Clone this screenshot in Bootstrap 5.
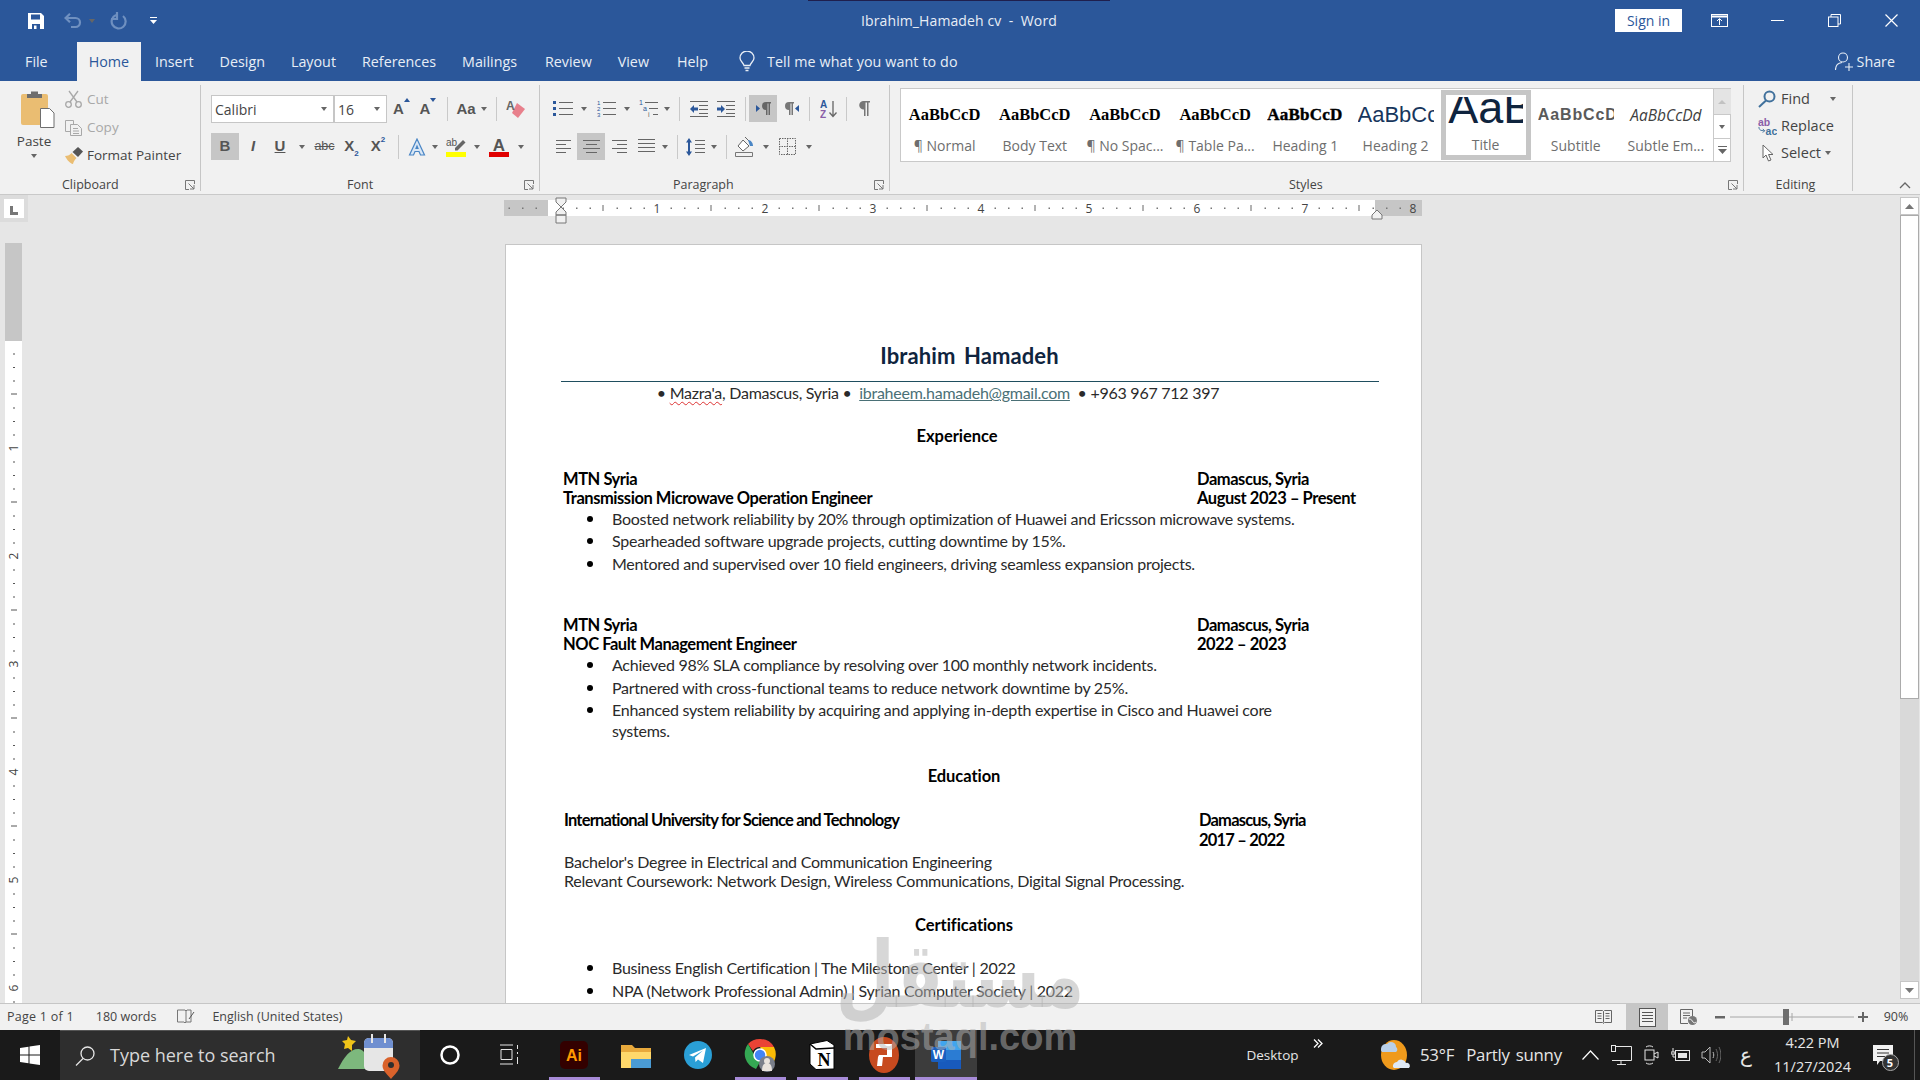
<!DOCTYPE html>
<html lang="en">
<head>
<meta charset="UTF-8">
<title>Ibrahim_Hamadeh cv - Word</title>
<link href="https://cdn.jsdelivr.net/npm/bootstrap@5.3.0/dist/css/bootstrap.min.css" rel="stylesheet">
<style>
body { height:1080px; overflow:hidden; background:#e6e6e6; font-family:"Open Sans","Liberation Sans",sans-serif; color:#444; font-size:13.5px; position:relative; }
svg { display:block; }
/* title bar and tabs */
.title-bar { height:42px; background:#2b579a; color:#e8eef6; flex:none; }
.accent-line { height:1px; width:302px; margin-left:808px; background:#1f1f4d; }
.title-main { height:39px; }
.qat { width:700px; padding-left:24px; display:grid; grid-template-columns:24px 12px 26px 12px 8px 24px 16px 14px; align-items:center; justify-items:center; }
.doc-title { width:518px; text-align:center; font-size:14px; letter-spacing:.1px; }
.sign-in { width:67px; height:23px; margin-left:397px; margin-right:8px; background:#fff; color:#2b579a; font-size:14px; line-height:23px; text-align:center; }
.win-btns { display:grid; grid-template-columns:58px 58px 57px 57px; justify-items:center; }
.tab-bar { height:39px; background:#2b579a; color:#e8eef6; flex:none; font-size:14.3px; }
.rb-tab { padding:0 13px; line-height:39px; }
.rb-tab.first { padding:0 29px 0 25px; }
.rb-tab.active { background:#f1f1f1; color:#2b579a; padding:0 12px; margin-right:1px; }
.rb-tab.nudge { margin-left:2px; }
.tell-me { margin-left:18px; gap:12px; letter-spacing:.1px; }
.share { margin-left:auto; margin-right:25px; gap:4px; }
/* ribbon */
.ribbon { height:114px; background:#f1f1f1; border-bottom:1px solid #c9c9c9; flex:none; }
.grp { margin-top:4px; height:106px; border-right:1px solid #c6c6c6; }
.grp-clip { width:201px; }
.grp-font { width:339px; padding-left:10px; }
.grp-para { width:350px; padding-left:10px; }
.grp-styles { width:854px; }
.grp-edit { width:109px; }
.grp-body { height:92px; }
.grp-label { display:grid; grid-template-columns:1fr auto 1fr; line-height:16px; font-size:12.5px; color:#444; padding-right:5px; align-items:center; }
.lbl-clip { grid-template-columns:62px auto 1fr; }
.lbl-font { margin-left:-10px; grid-template-columns:146px auto 1fr; }
.lbl-para { margin-left:-10px; grid-template-columns:133px auto 1fr; }
.lbl-styles { grid-template-columns:399px auto 1fr; }
.launch { justify-self:end; }
.tb-rows { padding-top:10px; }
.tb-row { display:grid; height:27px; align-items:center; justify-items:center; margin-bottom:11px; }
.font-r1 { grid-template-columns:123px 53px 1px 27px 26px 12px 26px 10px 14px 26px; }
.font-r2 { grid-template-columns:28px 28px 26px 18px 27px 27px 26px 14px 24px 11px 32px 10px 34px 10px; }
.para-r1 { grid-template-columns:26px 16px 28px 14px 28px 9px 16px 23px 32px 7px 28px 28px 8px 32px 3px 32px; }
.para-r2 { grid-template-columns:27px 28px 28px 27px 10px 14px 23px 13px 12px 26px 16px 26px 18px; }
.tb-on { background:#c6c6c6; align-self:stretch; justify-self:stretch; display:flex; align-items:center; justify-content:center; }
.crt { width:0; height:0; border-top:4px solid #666; border-left:3.5px solid transparent; border-right:3.5px solid transparent; }
.vs { width:1px; height:24px; background:#c9c9c9; }
.cmb { justify-self:stretch; height:28px; background:#fff; border:1px solid #c6c6c6; padding:0 6px 0 3px; font-size:14px; }
.sz-a { font-family:"Liberation Sans",sans-serif; color:#555; font-weight:700; font-size:15px; }
.sz-abc { font-size:12.5px; font-weight:400; }
.sz-sub { font-size:8px; color:#2b579a; line-height:9px; }
.paste-col { width:65px; padding:5px 0 0 20px; }
.paste-txt { width:36px; text-align:center; line-height:18px; margin:4px 0 0 -4px; }
.clip-row { height:28px; gap:6px; }
.muted-t { color:#a8a8a8; }
.clip-ic { width:16px; }
.styles-body { padding-top:3px; }
.gallery { margin-left:10px; height:74px; width:831px; background:#fff; border:1px solid #c9c9c9; }
.sty { width:90.2px; padding-top:10px; flex:none; }
.sty:first-child { margin-left:-1.5px; }
.sty-prev { width:76px; height:32px; line-height:32px; overflow:hidden; white-space:nowrap; text-align:center; font-family:"Liberation Serif",serif; font-weight:700; font-size:16.5px; color:#000; }
.sty-h1 { -webkit-text-stroke:.4px #000; font-size:17px; letter-spacing:.2px; text-align:left; }
.sty-h2 { font-family:"Liberation Sans",sans-serif; font-weight:400; font-size:22px; color:#17365d; }
.sty-sub { font-family:"Liberation Sans",sans-serif; font-size:16px; color:#5a5a5a; letter-spacing:.9px; text-align:left; }
.sty-em { font-family:"Open Sans",sans-serif; font-style:italic; font-weight:400; font-size:15.5px; color:#404040; }
.sty-lbl { font-size:14px; line-height:20px; margin-top:5px; color:#6e6e6e; white-space:nowrap; }
.sty-active { width:90px; height:70px; margin-top:1px; border:5px solid #c6c6c6; flex:none; }
.title-prev { height:27px; margin-top:2px; width:75px; overflow:hidden; font-family:"Liberation Sans",sans-serif; font-size:45px; line-height:22px; color:#0f243e; white-space:nowrap; }
.sty-active .sty-lbl { margin-top:11px; }
.sty-scroll { margin-left:1.5px; width:18px; border-left:1px solid #c9c9c9; flex:none; }
.scr-a { height:26px; background:#e4e4e4; border-bottom:1px solid #c9c9c9; }
.scr-b { height:24px; border-bottom:1px solid #c9c9c9; }
.scr-c { height:22px; }
.edit-rows { padding:0 0 0 14px; }
.edit-row { height:27px; gap:4px; font-size:14.5px; }
.edit-ic { width:19px; }
.collapse-col { width:100%; flex:1; padding:0 9px 5px 0; }
/* workspace */
.workspace { flex:1; min-height:0; }
.left-col { width:504px; flex:none; }
.tab-sel { width:28px; height:27px; background:#dcdcdc; padding:4px; }
.tab-sel-in { width:20px; height:19px; background:#fff; padding:7px 0 0 6px; }
.v-ruler { margin:21px 0 0 5px; }
.mid-col { width:920px; flex:none; padding-top:2px; }
.page-sheet { margin:17px 0 0 1px; width:917px; flex:1; min-height:0; background:#fff; border:1px solid #c6c6c6; border-bottom:0; overflow:hidden; padding:95px 42px 0 57px; font-family:Lato,"Liberation Sans",sans-serif; color:#2a2a2a; font-size:16px; letter-spacing:-.26px; font-weight:400; }
.cv-name { line-height:32px; font-size:22px; font-weight:700; text-align:center; color:#0f243e; padding-right:3px; letter-spacing:.1px; word-spacing:3px; }
.cv-rule { margin:9px 0 0 -2px; border-bottom:1px solid #1f4e5f; }
.cv-contact { line-height:20px; margin-top:1px; text-align:center; padding-right:66px; }
.cv-squig { text-decoration:underline wavy #d33; text-underline-offset:2px; text-decoration-thickness:1px; }
.cv-mail { color:#4a7076; text-decoration:underline; }
.cv-head { line-height:20px; font-weight:700; text-align:center; color:#000; letter-spacing:-.05px; font-size:16.5px; }
.cv-job { display:grid; grid-template-columns:634px 1fr; line-height:19px; font-weight:700; color:#000; font-size:16.5px; letter-spacing:-.45px; }
.cv-edu { grid-template-columns:635px 1fr; padding-left:1px; letter-spacing:-.8px; }
.cv-text { padding-left:1px; line-height:19px; }
.cv-ul { margin:.5px 0 0; padding:0 56px 0 49px; list-style:none; }
.cv-ul li { line-height:21px; margin-bottom:1.5px; position:relative; }
.cv-ul li::before { content:""; position:absolute; left:-25px; top:8px; width:6px; height:6px; border-radius:50%; background:#000; }
.cv-ul.ul-first { margin-top:-.5px; }
.h-exp { margin-top:23px; padding-right:28px; }
.h-edu { margin-top:24.5px; padding-right:14px; }
.h-cert { margin-top:24.5px; padding-right:14px; }
.mt-24 { margin-top:24px; }
.mt-42 { margin-top:42px; }
.mt-255 { margin-top:25.5px; }
.mt-edu2 { margin-top:1px; }
.mt-edu3 { margin-top:2px; }
.mt-225 { margin-top:22.5px; }
.right-col { flex:1; padding:2px 1px 4px 0; }
.vscroll { width:19px; background:#d9d9d9; }
.vs-btn { height:18px; background:#fff; border:1px solid #c6c6c6; flex:none; }
.vs-thumb { height:484px; background:#fff; border:1px solid #ababab; flex:none; }
/* status bar */
.status-bar { height:27px; background:#f1f1f1; border-top:1px solid #c6c6c6; flex:none; font-size:12.5px; color:#444; }
.st-left { padding-left:7px; gap:21px; }
.st-page { margin-right:1px; letter-spacing:.25px; }
.st-lang { margin-left:-4px; }
.st-right { display:grid; grid-template-columns:46px 42px 42px 20px 124px 18px 48px; justify-items:center; align-items:center; margin-left:auto; height:26px; }
/* taskbar */
.task-bar { height:50px; background:#1a1a1a; color:#e6e6e6; flex:none; }
.tk-start { width:60px; }
.tk-search { width:360px; background:#2e2e2e; border-top:1px solid #555; padding-left:15px; gap:15px; font-size:18px; color:#d8d8d8; }
.tk-deco { margin-right:20px; }
.tk-cell { width:60px; }
.tk-cell + .tk-app { margin-left:3px; }
.tk-app { width:62px; position:relative; }
.tk-app.pinned::after { content:""; position:absolute; left:6px; right:5px; bottom:0; height:3px; background:#a78bd8; }
.tk-app.current { background:#3c3c3c; }
.tk-app.current::after { left:0; right:0; }
.tk-right { margin-left:auto; display:grid; grid-template-columns:65px 25px 48px 34px 8px 141px 14px 30px 32px 28px 30px 32px 38px 95px 45px 15px; align-items:center; justify-items:center; }
.tk-clock { text-align:center; font-size:14.5px; line-height:24px; }
.tk-w { font-size:16.8px; justify-self:start; white-space:nowrap; word-spacing:2px; letter-spacing:-.25px; }
.show-desk { justify-self:end; width:1px; height:50px; background:#555; margin-right:5px; }
.badge-five { width:17px; height:17px; border-radius:50%; background:#333; border:1px solid #aaa; color:#fff; font-size:11px; font-weight:700; line-height:15px; text-align:center; position:absolute; right:-6px; bottom:-5px; }
.notif { position:relative; }
/* watermark from the site the picture was taken from */
.wm { position:absolute; left:0; width:1920px; text-align:center; pointer-events:none; color:rgba(179,179,179,.52); font-family:"Liberation Sans",sans-serif; font-weight:700; line-height:1; }
.wm-ar { top:942px; font-size:68px; font-family:"DejaVu Sans",sans-serif; transform:scaleY(1.35); }
.wm-en { top:1018px; font-size:38px; }
</style>
</head>
<body class="d-flex flex-column">

<div class="title-bar">
  <div class="accent-line"></div>
  <div class="title-main d-flex align-items-center">
    <div class="qat">
      <svg width="16" height="16" viewBox="0 0 16 16"><path fill="#fff" d="M0 0h13l3 3v13H0z"/><path fill="#2b579a" d="M3 1.500h9v5H3zM4 11h8v5H4z"/><path fill="#fff" d="M6 12.500h2.500V16H6z"/></svg>
      <span></span>
      <svg width="18" height="16" viewBox="0 0 18 16" fill="none" stroke="#6f90c0" stroke-width="2.200"><path d="M1.500 5h10a4.500 4.500 0 0 1 0 9H7"/><path d="M6 .8 1.500 5 6 9.200"/></svg>
      <span class="crt"></span><span></span>
      <svg width="18" height="18" viewBox="0 0 18 18" fill="none" stroke="#6f90c0" stroke-width="2.200"><path d="M7 3a7 7 0 1 0 7 1"/><path d="M8 0v7H2"/></svg>
      <span></span>
      <svg width="9" height="9" viewBox="0 0 9 9" fill="#fff"><path d="M1 1h7v1H1zM1 4h7L4.500 8z"/></svg>
    </div>
    <div class="doc-title">Ibrahim_Hamadeh cv&nbsp; -&nbsp; Word</div>
    <div class="sign-in">Sign in</div>
    <div class="win-btns">
      <svg width="17" height="13" viewBox="0 0 17 13" fill="none" stroke="#fff"><rect x=".5" y=".5" width="16" height="12"/><path d="M.5 2.500h16" stroke-width="2"/><path d="M8.500 11V5M6 7l2.500-2.500L11 7"/></svg>
      <svg width="13" height="13" viewBox="0 0 13 13" stroke="#fff"><path d="M0 6.500h13"/></svg>
      <svg width="13" height="13" viewBox="0 0 13 13" fill="none" stroke="#fff"><rect x=".5" y="3" width="9.500" height="9.500"/><path d="M3 3V.5h9.500V10H10"/></svg>
      <svg width="13" height="13" viewBox="0 0 13 13" stroke="#fff" stroke-width="1.200"><path d="M.5.5l12 12M12.500.5l-12 12"/></svg>
    </div>
  </div>
</div>

<div class="tab-bar d-flex align-items-center">
  <div class="rb-tab first">File</div>
  <div class="rb-tab active">Home</div>
  <div class="rb-tab">Insert</div>
  <div class="rb-tab">Design</div>
  <div class="rb-tab">Layout</div>
  <div class="rb-tab">References</div>
  <div class="rb-tab">Mailings</div>
  <div class="rb-tab nudge">Review</div>
  <div class="rb-tab">View</div>
  <div class="rb-tab nudge">Help</div>
  <div class="tell-me d-flex align-items-center">
    <svg width="16" height="21" viewBox="0 0 16 21" fill="none" stroke="#e8eef6" stroke-width="1.300"><path d="M5 14.500C4.500 11.500 1 10.500 1 7a7 7 0 0 1 14 0c0 3.500-3.500 4.500-4 7.500z"/><path d="M5.500 17h5M6.500 19.500h3"/></svg>
    <span>Tell me what you want to do</span>
  </div>
  <div class="share d-flex align-items-center">
    <svg width="18" height="19" viewBox="0 0 18 19" fill="none" stroke="#e8eef6" stroke-width="1.100"><circle cx="8" cy="5.500" r="4.500"/><path d="M.5 18c0-4 2.500-7 6.500-7.500M10 15h8M14 11v8"/></svg>
    <span>Share</span>
  </div>
</div>

<div class="ribbon d-flex">
  <!-- Clipboard -->
  <div class="grp grp-clip">
    <div class="grp-body d-flex">
      <div class="paste-col">
        <svg width="35" height="38" viewBox="0 0 35 38"><rect x="1" y="4" width="27" height="31" rx="2" fill="#eabd72"/><path fill="#6e6e6e" d="M7 4h4V1.500h7V4h4v4H7z"/><path d="M20.500 18.500h9l4.500 4.500v14.500H20.500z" fill="#fff" stroke="#6e6e6e"/></svg>
        <div class="paste-txt">Paste</div>
        <div class="d-flex justify-content-center paste-txt"><span class="crt"></span></div>
      </div>
      <div>
        <div class="clip-row d-flex align-items-center"><span class="clip-ic"><svg width="17" height="18" viewBox="0 0 17 18" fill="none" stroke="#a8a8a8" stroke-width="1.300"><circle cx="3.500" cy="14.500" r="2.800"/><circle cx="13.500" cy="14.500" r="2.800"/><path d="M5 12 13 1M12 12 4 1"/></svg></span><span class="muted-t">Cut</span></div>
        <div class="clip-row d-flex align-items-center"><span class="clip-ic"><svg width="17" height="17" viewBox="0 0 17 17" fill="none" stroke="#a8a8a8"><path d="M5.500 12.500h-5V1.500h8V5"/><path d="M5.500 5.500h7l4 4v7h-11zM8 9.500h5M8 12h6M8 14.500h6"/></svg></span><span class="muted-t">Copy</span></div>
        <div class="clip-row d-flex align-items-center"><span class="clip-ic"><svg width="18" height="17" viewBox="0 0 18 17"><path fill="#eabd72" d="M0 9c3 0 5-1 6.500-3l5 5c-2 2-3 4-3.500 6-3-.5-6-4-8-8z"/><path fill="#555" d="M7.500 5 13 0l5 4.500-5 5.500z"/></svg></span><span>Format Painter</span></div>
      </div>
    </div>
    <div class="grp-label lbl-clip"><span></span><span>Clipboard</span><span class="launch"><svg width="10" height="10" viewBox="0 0 10 10" fill="none" stroke="#777"><path d="M9.500 4V.5H.5v9H4M3.500 3.500 9 9M9 5v4H5"/></svg></span></div>
  </div>

  <!-- Font -->
  <div class="grp grp-font">
    <div class="grp-body tb-rows">
      <div class="tb-row font-r1">
        <div class="cmb d-flex align-items-center justify-content-between"><span>Calibri</span><span class="crt"></span></div>
        <div class="cmb d-flex align-items-center justify-content-between"><span>16</span><span class="crt"></span></div>
        <span></span>
        <span class="sz-a d-flex"><span>A</span><svg width="6" height="5" viewBox="0 0 6 5" fill="#2b579a"><path d="M0 4 3 0l3 4z"/></svg></span>
        <span class="sz-a d-flex"><span>A</span><svg width="6" height="5" viewBox="0 0 6 5" fill="#2b579a"><path d="M0 0h6L3 4z"/></svg></span>
        <span class="vs"></span>
        <span class="sz-a">Aa</span><span class="crt"></span>
        <span class="vs"></span>
        <svg width="20" height="19" viewBox="0 0 20 19"><path fill="#e8808c" d="M11 3l8 6-7 9-6-5z"/><text x="0" y="10" font-family="Liberation Sans" font-weight="700" font-size="12" fill="#666">A</text></svg>
      </div>
      <div class="tb-row font-r2">
        <div class="tb-on sz-a">B</div>
        <i class="sz-a">I</i>
        <u class="sz-a">U</u><span class="crt"></span>
        <s class="sz-a sz-abc">abc</s>
        <span class="sz-a d-flex align-items-end"><span>X</span><span class="sz-sub">2</span></span>
        <span class="sz-a d-flex align-items-start"><span>X</span><span class="sz-sub">2</span></span>
        <span class="vs"></span>
        <svg width="18" height="18" viewBox="0 0 18 18"><path d="M9 1 16.500 17h-4L11 13.500H7L5.500 17h-4zM8 10.500h2L9 8z" fill="#d8e6f5" stroke="#4a86c5" stroke-width="1.200"/></svg>
        <span class="crt"></span>
        <svg width="20" height="20" viewBox="0 0 20 20"><path fill="#666" d="M9 11 17 3l2.500 2.500-8 8H9z"/><text x="0" y="9" font-family="Liberation Sans" font-size="10" fill="#555">ab</text><path fill="#ff0" d="M0 15h20v5H0z"/></svg>
        <span class="crt"></span>
        <svg width="20" height="20" viewBox="0 0 20 20"><text x="10" y="14" text-anchor="middle" font-family="Liberation Sans" font-weight="700" font-size="17" fill="#555">A</text><path fill="#e00000" d="M0 15h20v5H0z"/></svg>
        <span class="crt"></span>
      </div>
    </div>
    <div class="grp-label lbl-font"><span></span><span>Font</span><span class="launch"><svg width="10" height="10" viewBox="0 0 10 10" fill="none" stroke="#777"><path d="M9.500 4V.5H.5v9H4M3.500 3.500 9 9M9 5v4H5"/></svg></span></div>
  </div>

  <!-- Paragraph -->
  <div class="grp grp-para">
    <div class="grp-body tb-rows">
      <div class="tb-row para-r1">
        <svg width="20" height="17" viewBox="0 0 20 17" stroke="#666"><path d="M6 2.500h14M6 8.500h14M6 14.500h14"/><path fill="#2b579a" stroke="none" d="M0 1h3v3H0zM0 7h3v3H0zM0 13h3v3H0z"/></svg><span class="crt"></span>
        <svg width="19" height="17" viewBox="0 0 19 17" stroke="#666"><path d="M6 2.500h13M6 8.500h13M6 14.500h13"/><g font-family="Liberation Sans" font-size="6" fill="#2b579a" stroke="none"><text x="0" y="5">1</text><text x="0" y="11">2</text><text x="0" y="17">3</text></g></svg><span class="crt"></span>
        <svg width="19" height="17" viewBox="0 0 19 17" stroke="#666"><path d="M6 2.500h13M10 8.500h9M14 14.500h5"/><g font-family="Liberation Sans" font-size="7" fill="#2b579a" stroke="none"><text x="0" y="5">1</text><text x="4" y="11">a</text><text x="9" y="17" fill="#666">i</text></g></svg><span class="crt"></span>
        <span class="vs"></span>
        <svg width="18" height="16" viewBox="0 0 18 16" stroke="#666"><path d="M0 .5h18M9 4.500h9M9 8.500h9M9 12.500h9M0 15.500h18"/><path fill="#2b579a" stroke="none" d="M0 8l4-4v2.500h4v3H4V12z"/></svg>
        <svg width="18" height="16" viewBox="0 0 18 16" stroke="#666"><path d="M0 .5h18M9 4.500h9M9 8.500h9M9 12.500h9M0 15.500h18"/><path fill="#2b579a" stroke="none" d="M8 8 4 4v2.500H0v3h4V12z"/></svg>
        <span class="vs"></span>
        <div class="tb-on"><svg width="15" height="13" viewBox="0 0 15 13"><path fill="#2b579a" d="M0 3l4 3.500L0 10z"/><path fill="#666" d="M10 0h5v1.500h-1V13h-1.500V1.500h-1V13H10V8a4 4 0 0 1 0-8z"/></svg></div>
        <svg width="15" height="13" viewBox="0 0 15 13"><path fill="#2b579a" d="M15 3l-4 3.500L15 10z"/><path fill="#777" d="M5 0h5v1.500H9V13H7.500V1.500h-1V13H5V8a4 4 0 0 1 0-8z"/></svg>
        <span class="vs"></span>
        <svg width="18" height="18" viewBox="0 0 18 18"><g font-family="Liberation Sans" font-size="10" font-weight="700"><text x="0" y="8" fill="#2b579a">A</text><text x="0" y="18" fill="#8a5ea8">Z</text></g><path fill="none" stroke="#666" stroke-width="1.300" d="M13 1v15M9.500 12.500 13 16.500l3.500-4"/></svg>
        <span class="vs"></span>
        <svg width="12" height="15" viewBox="0 0 12 15"><path fill="#777" d="M5 0h7v1.500h-1.500V15H9V1.500H7.500V15H6V8.500a4.250 4.250 0 0 1-1-8.500z"/></svg>
      </div>
      <div class="tb-row para-r2">
        <svg width="15" height="13" viewBox="0 0 15 13" stroke="#666"><path d="M0 .5h15M0 4.500h10M0 8.500h15M0 12.500h10"/></svg>
        <div class="tb-on"><svg width="17" height="13" viewBox="0 0 17 13" stroke="#666"><path d="M0 .5h17M3 4.500h11M0 8.500h17M3 12.500h11"/></svg></div>
        <svg width="15" height="13" viewBox="0 0 15 13" stroke="#666"><path d="M0 .5h15M5 4.500h10M0 8.500h15M5 12.500h10"/></svg>
        <svg width="17" height="15" viewBox="0 0 17 15" stroke="#666"><path d="M0 .5h17M0 4.500h17M0 8.500h17M0 12.500h17"/></svg><span class="crt"></span>
        <span class="vs"></span>
        <svg width="19" height="18" viewBox="0 0 19 18" stroke="#666"><path d="M9 2.500h10M9 6.500h10M9 10.500h10M9 14.500h10"/><path fill="#2b579a" stroke="none" d="M3 0l3 4.500H4v9h2L3 18l-3-4.500h2v-9H0z"/></svg><span class="crt"></span>
        <span class="vs"></span>
        <svg width="20" height="20" viewBox="0 0 20 20"><path d="M8 3 14 9l-6 5-5-5z" fill="#fff" stroke="#666"/><path d="M10 0l4 4" stroke="#666"/><path fill="#4a86c5" d="M13 3c3 0 5 3 5 6h-3z"/><path d="M.5 15.500h17v4H.5z" fill="#f1f1f1" stroke="#777"/></svg><span class="crt"></span>
        <svg width="17" height="17" viewBox="0 0 17 17" fill="none" stroke="#666" stroke-dasharray="1.500 1"><rect x=".5" y=".5" width="16" height="16"/><path d="M8.500 0v17M0 8.500h17"/></svg><span class="crt"></span>
      </div>
    </div>
    <div class="grp-label lbl-para"><span></span><span>Paragraph</span><span class="launch"><svg width="10" height="10" viewBox="0 0 10 10" fill="none" stroke="#777"><path d="M9.500 4V.5H.5v9H4M3.500 3.500 9 9M9 5v4H5"/></svg></span></div>
  </div>

  <!-- Styles -->
  <div class="grp grp-styles">
    <div class="grp-body styles-body">
      <div class="gallery d-flex">
        <div class="sty d-flex flex-column align-items-center"><div class="sty-prev">AaBbCcD</div><div class="sty-lbl">¶ Normal</div></div>
        <div class="sty d-flex flex-column align-items-center"><div class="sty-prev">AaBbCcD</div><div class="sty-lbl">Body Text</div></div>
        <div class="sty d-flex flex-column align-items-center"><div class="sty-prev">AaBbCcD</div><div class="sty-lbl">¶ No Spac...</div></div>
        <div class="sty d-flex flex-column align-items-center"><div class="sty-prev">AaBbCcD</div><div class="sty-lbl">¶ Table Pa...</div></div>
        <div class="sty d-flex flex-column align-items-center"><div class="sty-prev sty-h1">AaBbCcD</div><div class="sty-lbl">Heading 1</div></div>
        <div class="sty d-flex flex-column align-items-center"><div class="sty-prev sty-h2">AaBbCc</div><div class="sty-lbl">Heading 2</div></div>
        <div class="sty-active d-flex flex-column align-items-center"><div class="title-prev">AaBb</div><div class="sty-lbl">Title</div></div>
        <div class="sty d-flex flex-column align-items-center"><div class="sty-prev sty-sub">AaBbCcD</div><div class="sty-lbl">Subtitle</div></div>
        <div class="sty d-flex flex-column align-items-center"><div class="sty-prev sty-em">AaBbCcDd</div><div class="sty-lbl">Subtle Em...</div></div>
        <div class="sty-scroll">
          <div class="scr-a d-flex align-items-center justify-content-center"><svg width="8" height="4" viewBox="0 0 8 4" fill="#c2c2c2"><path d="M0 4l4-4 4 4z"/></svg></div>
          <div class="scr-b d-flex align-items-center justify-content-center"><span class="crt"></span></div>
          <div class="scr-c d-flex align-items-center justify-content-center"><svg width="9" height="8" viewBox="0 0 9 8" fill="#666"><path d="M0 0h9v1H0zM0 3h9L4.500 8z"/></svg></div>
        </div>
      </div>
    </div>
    <div class="grp-label lbl-styles"><span></span><span>Styles</span><span class="launch"><svg width="10" height="10" viewBox="0 0 10 10" fill="none" stroke="#777"><path d="M9.500 4V.5H.5v9H4M3.500 3.500 9 9M9 5v4H5"/></svg></span></div>
  </div>

  <!-- Editing -->
  <div class="grp grp-edit">
    <div class="grp-body edit-rows">
      <div class="edit-row d-flex align-items-center"><span class="edit-ic"><svg width="18" height="18" viewBox="0 0 18 18" fill="none" stroke="#41719c" stroke-width="2"><circle cx="11.500" cy="6.500" r="5"/><path d="M8 10.500 1 17"/></svg></span><span>Find</span><span class="crt ms-3"></span></div>
      <div class="edit-row d-flex align-items-center"><span class="edit-ic"><svg width="19" height="18" viewBox="0 0 20 18"><g font-family="Liberation Sans" font-size="11" font-weight="700"><text x="0" y="9" fill="#8a5ea8">ab</text><text x="8" y="18" fill="#41719c">ac</text></g><path fill="none" stroke="#41719c" d="M1 10c0 3 1.500 4 6 4M5 12l2 2-2 2"/></svg></span><span>Replace</span></div>
      <div class="edit-row d-flex align-items-center"><span class="edit-ic ps-1"><svg width="12" height="18" viewBox="0 0 12 18" fill="#fff" stroke="#666"><path d="M1 1v13l3-3 2.500 6 2.500-1-2.500-5.500H11z"/></svg></span><span>Select</span><span class="crt"></span></div>
    </div>
    <div class="grp-label text-center d-block">Editing</div>
  </div>

  <div class="collapse-col d-flex align-items-end justify-content-end">
    <svg width="12" height="7" viewBox="0 0 12 7" fill="none" stroke="#666" stroke-width="1.300"><path d="M1 6l5-5 5 5"/></svg>
  </div>
</div>

<div class="workspace d-flex">
  <div class="left-col">
    <div class="tab-sel"><div class="tab-sel-in"><svg width="8" height="9" viewBox="0 0 8 9" fill="#777"><path d="M0 0h3v6h5v3H0z"/></svg></div></div>
    <svg id="vruler" class="v-ruler" width="17" height="760"></svg>
  </div>
  <div class="mid-col d-flex flex-column">
    <svg id="hruler" width="920" height="30"></svg>
    <div class="page-sheet">
      <div class="cv-name">Ibrahim Hamadeh</div>
      <div class="cv-rule"></div>
      <div class="cv-contact">• <span class="cv-squig">Mazra'a</span>, Damascus, Syria •&nbsp; <span class="cv-mail">ibraheem.hamadeh@gmail.com</span> &nbsp;• +963 967 712 397</div>

      <div class="cv-head h-exp">Experience</div>
      <div class="cv-job mt-24"><span>MTN Syria</span><span>Damascus, Syria</span></div>
      <div class="cv-job"><span>Transmission Microwave Operation Engineer</span><span>August 2023 – Present</span></div>
      <ul class="cv-ul ul-first">
        <li>Boosted network reliability by 20% through optimization of Huawei and Ericsson microwave systems.</li>
        <li>Spearheaded software upgrade projects, cutting downtime by 15%.</li>
        <li>Mentored and supervised over 10 field engineers, driving seamless expansion projects.</li>
      </ul>

      <div class="cv-job mt-42"><span>MTN Syria</span><span>Damascus, Syria</span></div>
      <div class="cv-job"><span>NOC Fault Management Engineer</span><span>2022 – 2023</span></div>
      <ul class="cv-ul">
        <li>Achieved 98% SLA compliance by resolving over 100 monthly network incidents.</li>
        <li>Partnered with cross-functional teams to reduce network downtime by 25%.</li>
        <li>Enhanced system reliability by acquiring and applying in-depth expertise in Cisco and Huawei core systems.</li>
      </ul>

      <div class="cv-head h-edu">Education</div>
      <div class="cv-job cv-edu mt-255"><span>International University for Science and Technology</span><span>Damascus, Syria</span></div>
      <div class="cv-job cv-edu mt-edu2"><span></span><span>2017 – 2022</span></div>
      <div class="cv-text mt-edu3">Bachelor's Degree in Electrical and Communication Engineering</div>
      <div class="cv-text">Relevant Coursework: Network Design, Wireless Communications, Digital Signal Processing.</div>

      <div class="cv-head h-cert">Certifications</div>
      <ul class="cv-ul mt-225">
        <li>Business English Certification | The Milestone Center | 2022</li>
        <li>NPA (Network Professional Admin) | Syrian Computer Society | 2022</li>
      </ul>
    </div>
  </div>
  <div class="right-col d-flex justify-content-end">
    <div class="vscroll d-flex flex-column justify-content-between">
      <div>
        <div class="vs-btn d-flex align-items-center justify-content-center"><svg width="9" height="5" viewBox="0 0 9 5" fill="#777"><path d="M0 5l4.500-5L9 5z"/></svg></div>
        <div class="vs-thumb"></div>
      </div>
      <div class="vs-btn d-flex align-items-center justify-content-center"><svg width="9" height="5" viewBox="0 0 9 5" fill="#777"><path d="M0 0h9L4.500 5z"/></svg></div>
    </div>
  </div>
</div>

<div class="status-bar d-flex align-items-center">
  <div class="st-left d-flex align-items-center">
    <span class="st-page">Page 1 of 1</span>
    <span>180 words</span>
    <svg width="18" height="16" viewBox="0 0 18 16" fill="none" stroke="#777"><path d="M.5 1h7.500l1 1 1-1h4v12H9l-1 1-1-1H.5zM9 2v11"/><path stroke="#555" d="M12 10l5-7"/></svg>
    <span class="st-lang">English (United States)</span>
  </div>
  <div class="st-right">
    <svg width="17" height="16" viewBox="0 0 17 16" fill="none" stroke="#666"><path d="M.5 1.500h7l1 1 1-1h7v12h-7l-1 1-1-1h-7zM8.500 2.500v11M2.500 4.500h4M2.500 7h4M2.500 9.500h4M10.500 4.500h4M10.500 7h4M10.500 9.500h4"/></svg>
    <div class="tb-on"><svg width="17" height="19" viewBox="0 0 17 19" fill="#f1f1f1" stroke="#555"><rect x=".5" y=".5" width="16" height="18"/><path d="M3 4.500h11M3 7.500h11M3 10.500h11M3 13.500h11"/></svg></div>
    <svg width="18" height="17" viewBox="0 0 18 17" fill="none" stroke="#666"><path d="M8 14.500H.5V.5h12V7M3 4h7M3 6.500h7M3 9h4"/><circle cx="12.500" cy="11.500" r="4.500" fill="#777" stroke="none"/><path stroke="#f1f1f1" d="M9 10c3 0 3 2 4 3s2 1 3 0"/></svg>
    <svg width="10" height="3" viewBox="0 0 10 3" fill="#666"><path d="M0 0h10v2.500H0z"/></svg>
    <svg width="124" height="16" viewBox="0 0 124 16"><path stroke="#a6a6a6" d="M0 8h124M62 4v8"/><path fill="#6e6e6e" d="M53 0h6v16h-6z"/></svg>
    <svg width="10" height="10" viewBox="0 0 10 10" fill="#666"><path d="M4 0h2v4h4v2H6v4H4V6H0V4h4z"/></svg>
    <span>90%</span>
  </div>
</div>

<div class="task-bar d-flex">
  <div class="tk-start d-flex align-items-center justify-content-center">
    <svg width="20" height="20" viewBox="0 0 20 20" fill="#fff"><path d="M0 3l8.500-1.200v7.700H0zM9.500 1.600 20 0v9.500H9.500zM0 10.500h8.500v7.700L0 17zM9.500 10.500H20V20L9.500 18.400z"/></svg>
  </div>
  <div class="tk-search d-flex align-items-center">
    <svg width="20" height="20" viewBox="0 0 20 20" fill="none" stroke="#e6e6e6" stroke-width="1.300"><circle cx="12.500" cy="7.500" r="6.500"/><path d="M8 12.500 1 19.500"/></svg>
    <span class="flex-fill">Type here to search</span>
    <svg class="tk-deco" width="62" height="46" viewBox="0 0 62 46"><path fill="#7db87d" d="M0 36c6-12 12-20 20-20 5 0 9 4 11 20z"/><path fill="#f0c419" d="M10 3l3 4 5 1-4 4 0 6-4-3-4 1 1-5-3-3 5-1z"/><rect x="26" y="5" width="29" height="33" rx="5" fill="#e6e6e6"/><path fill="#6f8fd0" d="M26 10a5 5 0 0 1 5-5h19a5 5 0 0 1 5 5v5H26z"/><path stroke="#e6e6e6" stroke-width="2" d="M34 1v9M47 1v9"/><path fill="#d9622b" d="M53 24a8.500 8.500 0 0 1 8.500 8.500C61.500 38 56 42 53 46c-3-4-8.500-8-8.500-13.500A8.500 8.500 0 0 1 53 24z"/><circle cx="53" cy="32" r="3" fill="#2e2e2e"/></svg>
  </div>
  <div class="tk-cell d-flex align-items-center justify-content-center"><svg width="20" height="20" viewBox="0 0 20 20" fill="none" stroke="#fff" stroke-width="2.500"><circle cx="10" cy="10" r="8.500"/></svg></div>
  <div class="tk-cell d-flex align-items-center justify-content-center"><svg width="20" height="22" viewBox="0 0 20 22" fill="none" stroke="#e6e6e6"><path d="M0 1h13M1 5.500h11v10H1zM0 20h13M17.500 1v4M17.500 8v2M17.500 13v7"/></svg></div>
  <div class="tk-app pinned d-flex align-items-center justify-content-center">
    <svg width="28" height="28" viewBox="0 0 28 28"><rect width="28" height="28" rx="5" fill="#330000"/><text x="14" y="20" text-anchor="middle" font-family="Liberation Sans" font-weight="700" font-size="16" fill="#ff9a00">Ai</text></svg>
  </div>
  <div class="tk-app d-flex align-items-center justify-content-center">
    <svg width="30" height="26" viewBox="0 0 30 26"><path fill="#e8a93c" d="M0 3h11l3 3h16v20H0z"/><path fill="#ffd86b" d="M0 10h30v16H0z"/><path fill="#4a9bd4" d="M10 17h20v9H10z"/></svg>
  </div>
  <div class="tk-app d-flex align-items-center justify-content-center">
    <svg width="28" height="28" viewBox="0 0 28 28"><circle cx="14" cy="14" r="14" fill="#2a9fd6"/><path fill="#fff" d="M5 14 22 7l-3 15-5-3.500-2.500 2.500-.5-4.500 8-7-10 6z"/></svg>
  </div>
  <div class="tk-app pinned d-flex align-items-center justify-content-center">
    <svg width="32" height="34" viewBox="0 0 32 34"><path fill="#ea4335" d="M16 1a16 16 0 0 1 14 8H16a8 8 0 0 0-7 4L4 6a16 16 0 0 1 12-5z"/><path fill="#fbbc05" d="M30 9a16 16 0 0 1-6 21l-7-12a8 8 0 0 0-1-9z"/><path fill="#34a853" d="M4 6l7 12a8 8 0 0 0 6 4l-5 9A16 16 0 0 1 4 6z"/><circle cx="16" cy="17" r="6" fill="#4285f4" stroke="#fff" stroke-width="1.500"/><circle cx="23" cy="26" r="8" fill="#7a7f8a"/><circle cx="23" cy="23" r="3" fill="#e8e2dc"/><path fill="#e8e2dc" d="M18 33c0-6 2-8 5-8s5 2 5 8z"/></svg>
  </div>
  <div class="tk-app pinned d-flex align-items-center justify-content-center">
    <svg width="26" height="30" viewBox="0 0 26 30"><path fill="#fff" stroke="#000" d="M1 4l17-3.500 7 4.500v24l-18 .5L1 24z"/><path fill="none" stroke="#000" stroke-width="1.500" d="M1 4l6 5 18-1"/><text x="15" y="26" text-anchor="middle" font-family="Liberation Serif" font-weight="700" font-size="18" fill="#000">N</text></svg>
  </div>
  <div class="tk-app pinned d-flex align-items-center justify-content-center">
    <svg width="30" height="36" viewBox="0 0 30 36"><ellipse cx="15" cy="18" rx="15" ry="18" fill="#c74a1f"/><path fill="#fff" d="M7 7h16v13h-9l-1 9H8l1-9 1-2h8V11H7z"/></svg>
  </div>
  <div class="tk-app pinned current d-flex align-items-center justify-content-center">
    <svg width="30" height="30" viewBox="0 0 30 30"><path fill="#41a5ee" d="M7 1h23v10H7z"/><path fill="#2b7cd3" d="M7 10h23v10H7z"/><path fill="#185abd" d="M7 20h23v9H7z"/><rect y="7" width="15" height="15" rx="1.500" fill="#1a5fc0"/><text x="7.500" y="18.500" text-anchor="middle" font-family="Liberation Sans" font-weight="700" font-size="12" fill="#fff">W</text></svg>
  </div>
  <div class="tk-right">
    <span>Desktop</span>
    <svg class="mb-4" width="10" height="9" viewBox="0 0 10 9" fill="none" stroke="#fff" stroke-width="1.300"><path d="M1 .5l4 4-4 4M5 .5l4 4-4 4"/></svg>
    <span></span>
    <svg width="32" height="34" viewBox="0 0 32 34"><ellipse cx="15" cy="17" rx="13" ry="15" fill="#ef9a1c"/><path fill="#b8cfe8" d="M2 11a5 5 0 0 1 6-5 5 5 0 0 1 9 3 3 3 0 0 1 0 5H3a3 3 0 0 1-1-3z"/><path fill="#dfe9f5" d="M14 29a4 4 0 0 1 4-5 5 5 0 0 1 9 1 3 3 0 0 1 3 5H15z"/></svg>
    <span></span>
    <span class="tk-w">53°F&nbsp; Partly sunny</span>
    <span></span>
    <svg width="17" height="10" viewBox="0 0 17 10" fill="none" stroke="#fff" stroke-width="1.200"><path d="M.5 9.500l8-8.500 8 8.500"/></svg>
    <svg width="21" height="20" viewBox="0 0 21 20" fill="none" stroke="#e6e6e6"><path d="M4 1.500h16.500v14H1M10 15.500v3.500M6 19.500h9"/><rect x=".5" y=".5" width="4" height="6" fill="#1a1a1a"/></svg>
    <svg width="15" height="20" viewBox="0 0 15 20" fill="none" stroke="#e6e6e6"><rect x="1" y="5" width="9" height="10"/><path d="M10 9l4-2v6l-4-2M2 2c2-1.500 5-1.500 7 0M2 18c2 1.500 5 1.500 7 0"/></svg>
    <svg width="19" height="14" viewBox="0 0 19 14" fill="none" stroke="#e6e6e6"><rect x="4.500" y="2.500" width="14" height="10"/><rect x="7" y="5" width="9" height="5" fill="#e6e6e6" stroke="none"/><path d="M2 0v4M0 4h4v2H0zM2 6v3h3"/></svg>
    <svg width="20" height="18" viewBox="0 0 20 18" fill="none" stroke="#bbb"><path d="M1 6h3l5-5v16l-5-5H1zM12 6c1 2 1 4 0 6"/><path stroke="#666" d="M15 3c2 4 2 8 0 12M18 1c2.500 5 2.500 11 0 16"/></svg>
    <span class="fs-5 fw-light">ع</span>
    <div class="tk-clock"><div>4:22 PM</div><div>11/27/2024</div></div>
    <div class="notif"><svg width="20" height="21" viewBox="0 0 20 21"><path fill="#f1f1f1" d="M0 0h20v16h-13l-3 4v-4H0z"/><path stroke="#333" d="M4 4.500h12M4 8h12M4 11.500h8"/></svg><div class="badge-five">5</div></div>
    <span class="show-desk"></span>
  </div>
</div>

<div class="wm wm-ar">مستقل</div>
<div class="wm wm-en">mostaql.com</div>

<script>
// ruler ticks are regular, so build them instead of listing 100+ elements
document.addEventListener('DOMContentLoaded', function () {
    const grey = '#c6c6c6';
    let h = `<rect y="3" width="918" height="16" fill="${grey}"/><rect x="44" y="3" width="827" height="16" fill="#fff"/>`;
    for (let i = -3; i <= 66; i++) {
        const x = 45 + i * 13.5;
        if (i > 0 && i % 8 === 0) {
            h += `<text x="${x}" y="15.500" text-anchor="middle" font-family="Open Sans" font-size="12" fill="#444">${i / 8}</text>`;
        } else if (i % 4 === 0 && i !== 0) {
            h += `<path d="M${x} 8v6" stroke="#666"/>`;
        } else if (i !== 0) {
            h += `<rect x="${x}" y="10.500" width="1.500" height="1.500" fill="#777"/>`;
        }
    }
    h += '<path d="M52 1h10v4l-5 5-5-5zM57 10l5 5v3H52v-3zM52 18h10v8H52z" fill="#f1f1f1" stroke="#777"/>';
    h += '<path d="M868 18l5-5 5 5v4h-10z" fill="#f1f1f1" stroke="#777"/>';
    document.getElementById('hruler').innerHTML = h;

    let v = `<rect width="17" height="98" fill="${grey}"/><rect y="98" width="17" height="662" fill="#fff"/>`;
    for (let i = 1; i <= 49; i++) {
        const y = 97 + i * 13.5;
        if (i % 8 === 0) {
            v += `<text transform="translate(13 ${y}) rotate(-90)" text-anchor="middle" font-family="Open Sans" font-size="12" fill="#444">${i / 8}</text>`;
        } else if (i % 4 === 0) {
            v += `<path d="M6 ${y}h6" stroke="#555"/>`;
        } else {
            v += `<rect x="8" y="${y}" width="2" height="1" fill="#555"/>`;
        }
    }
    document.getElementById('vruler').innerHTML = v;
});
</script>
<script src="https://cdn.jsdelivr.net/npm/bootstrap@5.3.0/dist/js/bootstrap.bundle.min.js"></script>
</body>
</html>
